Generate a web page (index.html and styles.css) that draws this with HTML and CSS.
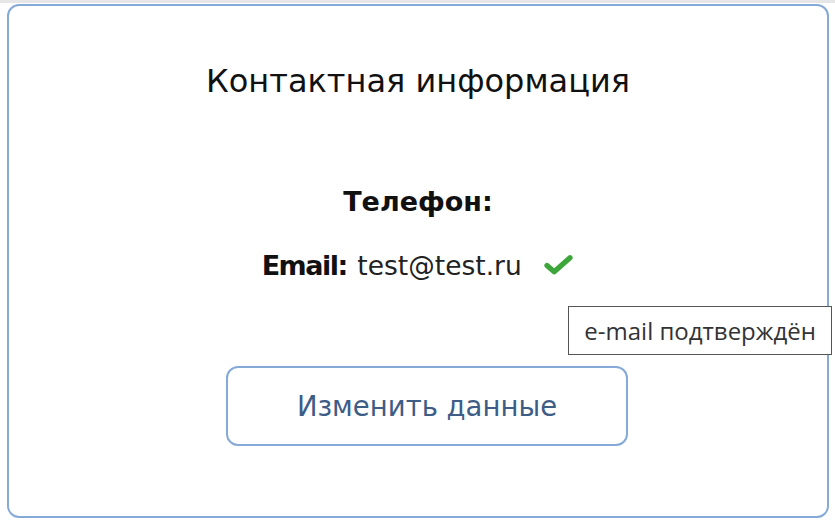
FILE: index.html
```html
<!DOCTYPE html>
<html lang="ru">
<head>
    <meta charset="UTF-8">
    <title>Контактная информация</title>
    <link rel="stylesheet" href="styles.css">
</head>
<body>
    <!-- карточка с контактами -->
    <div class="card">
        <h2 class="card-title">Контактная информация</h2>

        <div class="contacts">
            <p class="contact-row"><strong>Телефон:</strong></p>
            <p class="contact-row">
                <strong class="email-label">Email:</strong>
                <span class="contact-value">test@test.ru</span>
                <span class="verified">
                    <svg class="check" viewBox="0 0 32 24" width="31" height="23">
                        <path d="M4 13 L11.5 19.5 L28 5" fill="none" stroke="#3da63a" stroke-width="5.5" stroke-linecap="round" stroke-linejoin="round"/>
                    </svg>
                    <span class="tooltip">e-mail подтверждён</span>
                </span>
            </p>
        </div>

        <button class="edit-btn">Изменить данные</button>
    </div>
</body>
</html>
```

FILE: styles.css
```css
/* страница */
body {
    margin: 0;
    padding: 1px 6px 6px 7px;
    border-top: 3px solid #e6e6e6;
    background: #fff;
    font-family: "DejaVu Sans", sans-serif;
    color: #111;
}

/* карточка */
.card {
    box-sizing: border-box;
    height: 514px;
    border: 2px solid #86aad8;
    border-radius: 12px;
    text-align: center;
    padding-top: 56px;
}

.card-title {
    margin: 0;
    font-size: 32px;
    font-weight: normal;
}

/* контакты */
.contacts {
    margin-top: 86px;
}

.contact-row {
    margin: 0 0 33px 0;
    font-size: 27px;
}

.contact-row strong {
    font-weight: bold;
}

.email-label {
    letter-spacing: -1.5px;
}

.contact-value {
    font-size: 26.5px;
    font-weight: normal;
    color: #222;
    margin-left: 2px;
}

.verified {
    position: relative;
    display: inline-block;
    margin-left: 13px;
    vertical-align: -1px;
}

.check {
    display: block;
}

.tooltip {
    position: absolute;
    left: 25px;
    top: 53px;
    white-space: nowrap;
    padding: 7px 15px;
    border: 1px solid #555;
    background: #fff;
    font-family: "Open Sans", sans-serif;
    font-size: 24px;
    line-height: 33px;
    color: #333;
}

/* кнопка */
.edit-btn {
    margin: 52px 0 0 18px;
    width: 402px;
    height: 80px;
    border: 2px solid #86aad8;
    border-radius: 12px;
    background: #fff;
    font-family: "DejaVu Sans", sans-serif;
    font-size: 27.5px;
    color: #3d5d87;
}
```
